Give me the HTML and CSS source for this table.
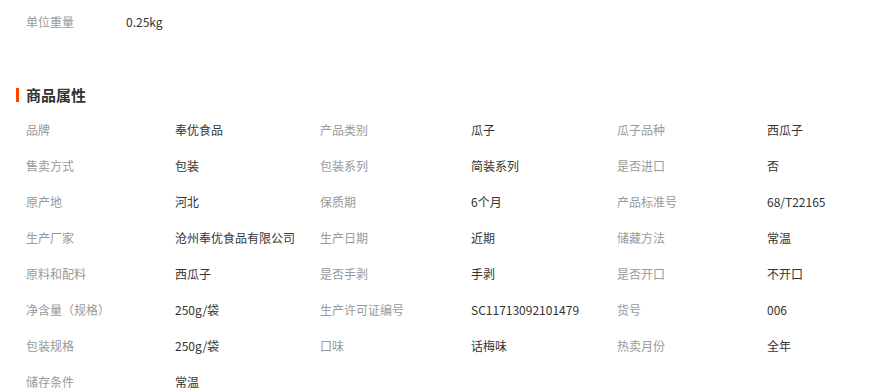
FILE: index.html
```html
<!DOCTYPE html>
<html lang="zh-CN">
<head>
<meta charset="utf-8">
<link rel="stylesheet" href="styles.css">
</head>
<body>
<div class="weight-row">
  <span class="weight-label">单位重量</span>
  <span class="weight-value">0.25kg</span>
</div>
<h2 class="section-title"><span class="bar"></span>商品属性</h2>
<div class="attrs">
  <div class="k">品牌</div><div class="v">奉优食品</div>
  <div class="k">产品类别</div><div class="v">瓜子</div>
  <div class="k">瓜子品种</div><div class="v">西瓜子</div>

  <div class="k">售卖方式</div><div class="v">包装</div>
  <div class="k">包装系列</div><div class="v">简装系列</div>
  <div class="k">是否进口</div><div class="v">否</div>

  <div class="k">原产地</div><div class="v">河北</div>
  <div class="k">保质期</div><div class="v">6个月</div>
  <div class="k">产品标准号</div><div class="v">68/T22165</div>

  <div class="k">生产厂家</div><div class="v">沧州奉优食品有限公司</div>
  <div class="k">生产日期</div><div class="v">近期</div>
  <div class="k">储藏方法</div><div class="v">常温</div>

  <div class="k">原料和配料</div><div class="v">西瓜子</div>
  <div class="k">是否手剥</div><div class="v">手剥</div>
  <div class="k">是否开口</div><div class="v">不开口</div>

  <div class="k">净含量（规格）</div><div class="v">250g/袋</div>
  <div class="k">生产许可证编号</div><div class="v">SC11713092101479</div>
  <div class="k">货号</div><div class="v">006</div>

  <div class="k">包装规格</div><div class="v">250g/袋</div>
  <div class="k">口味</div><div class="v">话梅味</div>
  <div class="k">热卖月份</div><div class="v">全年</div>

  <div class="k">储存条件</div><div class="v">常温</div>
</div>
</body>
</html>
```
FILE: styles.css
```css
html, body {
  margin: 0;
  padding: 0;
  background: #fff;
}
body {
  font-family: "Noto Sans CJK SC", "Open Sans", sans-serif;
  font-size: 12px;
  color: #333;
}
.weight-row {
  display: flex;
  padding: 12px 0 0 26px;
  height: 20px;
  line-height: 20px;
}
.weight-label {
  width: 100px;
  color: #999;
}
.weight-value {
  color: #333;
}
.section-title {
  display: flex;
  align-items: center;
  margin: 53px 0 0 0;
  padding-left: 16px;
  height: 20px;
  line-height: 20px;
  font-size: 15px;
  font-weight: bold;
  color: #333;
}
.bar {
  display: block;
  width: 3px;
  height: 14px;
  background: #ff4400;
  margin-right: 7px;
}
.attrs {
  display: grid;
  grid-template-columns: 149px 145px 151px 146px 150px 1fr;
  grid-auto-rows: 36px;
  padding-left: 26px;
  margin-top: 7px;
  align-items: center;
  line-height: 20px;
}
.k {
  color: #999;
  white-space: nowrap;
}
.v {
  color: #333;
  white-space: nowrap;
}
```
